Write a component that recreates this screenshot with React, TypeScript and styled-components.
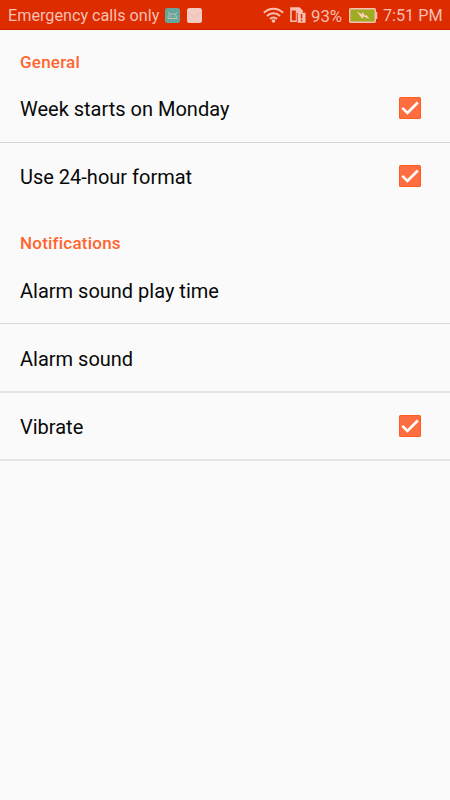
import React from "react";
import styled, { createGlobalStyle } from "styled-components";

const GlobalStyle = createGlobalStyle`
  *, *::before, *::after { box-sizing: border-box; }
  html, body { margin: 0; background: #fafafa; }
  body { font-family: Roboto, "Liberation Sans", sans-serif; }
`;

const Screen = styled.main`
  width: 100%;
  min-height: 800px;
  background: #fafafa;
  overflow: hidden;
`;

const StatusBar = styled.header`
  display: flex;
  align-items: center;
  height: 30px;
  padding: 1px 8px 0;
  background: #dd2c00;
  border-bottom: 1px solid #d01700;
  color: #f8bfb2;
  white-space: nowrap;
`;

const StatusText = styled.span<{ $width: number; $gap?: number }>`
  flex: none;
  width: ${(p) => p.$width}px;
  margin-left: ${(p) => p.$gap ?? 0}px;
  padding-top: 2px;
  font-size: 16.2px;
  line-height: 26px;
`;

const Percentage = styled(StatusText)`
  font-size: 16.8px;
`;

const StatusIcon = styled.svg<{ $gap: number }>`
  display: block;
  flex: none;
  margin-left: ${(p) => p.$gap}px;
`;

const Spacer = styled.div`
  flex: 1;
`;

const SectionTitle = styled.h2`
  display: flex;
  align-items: center;
  height: 45px;
  margin: 0;
  padding: 19px 20px 0;
  color: #ff652f;
  font-size: 17px;
  font-weight: 500;
  letter-spacing: 0.22px;
  line-height: 24px;
`;

const Row = styled.label<{ $line?: string; $thickness?: number; $height?: number; $top?: number }>`
  display: flex;
  align-items: center;
  justify-content: space-between;
  height: ${(p) => p.$height ?? 68}px;
  padding: ${(p) => p.$top ?? 2}px 29px 0 20px;
  border-bottom: ${(p) => p.$thickness ?? 1}px solid ${(p) => p.$line ?? "transparent"};
`;

const RowLabel = styled.span`
  color: #080808;
  font-size: 20px;
  line-height: 28px;
  white-space: nowrap;
`;

const CheckIcon = styled.svg`
  display: block;
  margin-top: -3px;
`;

const Checkbox = () => (
  <CheckIcon width="22" height="22" viewBox="0 0 22 22">
    <rect width="22" height="22" rx="1.5" fill="#ff5d20" />
    <rect x="1" y="1" width="20" height="20" rx="1" fill="#ff6e40" />
    <path d="M3.3 10.9 8.4 15.9 18.8 5.5" fill="none" stroke="#fff" strokeWidth="2.6" />
  </CheckIcon>
);

const AndroidIcon = () => (
  <StatusIcon $gap={6} width="15" height="15" viewBox="0 0 15 15">
    <rect width="15" height="15" rx="2.5" fill="#65a59b" />
    <path d="M3 10.5h9c0-2.8-1.8-4.6-4.5-4.6S3 7.7 3 10.5ZM4.8 6.7 3.4 4.3M10.2 6.7 11.6 4.3" fill="none" stroke="#c3c4b8" />
    <path d="M5.3 8.5h.8M8.9 8.5h.8" stroke="#c3c4b8" />
  </StatusIcon>
);

const MailIcon = () => (
  <StatusIcon $gap={7} width="15" height="15" viewBox="0 0 15 15">
    <rect width="15" height="15" rx="2.5" fill="#f3cbc3" />
    <path d="M1 4.5 7.5 9 14 4.5" fill="none" stroke="#ebb5ab" strokeWidth="0.8" />
  </StatusIcon>
);

const WifiIcon = () => (
  <StatusIcon $gap={0} width="21" height="16" viewBox="0 0 21 16">
    <g fill="none" stroke="#f8bfb2" strokeWidth="2.1">
      <path d="M.9 5.7Q5.2 1.7 10.5 1.7T20.1 5.7" />
      <path d="M4 9Q6.8 6.2 10.5 6.2T17 9" />
      <path d="M7 12Q8.5 10.5 10.5 10.5T14 12" />
    </g>
    <circle cx="10.5" cy="14" r="1.8" fill="#f8bfb2" />
  </StatusIcon>
);

const SimIcon = () => (
  <StatusIcon $gap={6} width="16" height="16" viewBox="0 0 16 16">
    <path d="M.2.3h9.300L13 3.800V5H6.800v10H.2ZM1.800 3.500v9.900h4V3.500Z" fill="#f8bfb2" fillRule="evenodd" />
    <path d="M6.600 3.800h4.200l2 2H15.500V15.700H7.700V6H6.600Z" fill="#f8bfb2" />
    <path d="M11.600 7v4.500M11.600 12.700v1.500" stroke="#dd2c00" strokeWidth="1.500" />
  </StatusIcon>
);

const BatteryIcon = () => (
  <StatusIcon $gap={0} width="29" height="15" viewBox="0 0 29 15">
    <rect x=".7" y=".7" width="25.600" height="13.600" rx="1" fill="#9fab22" stroke="#f8bfb2" strokeWidth="1.400" />
    <path d="M26.500 4H28.300v7H26.500Z" fill="#f8bfb2" />
    <path d="m7.500 3.300 5.300 2.900.7-2.200 2.500 3.700 1.700-.8 2.600 4-5.700-2.300-1.200 2.200Z" fill="#ffd0bd" />
  </StatusIcon>
);

interface Setting {
  label: string;
  checked?: boolean;
  line?: string;
  thickness?: number;
  height?: number;
  top?: number;
}

const general: Setting[] = [
  { label: "Week starts on Monday", checked: true, line: "#d5d5d5", top: 1 },
  { label: "Use 24-hour format", checked: true, top: 1 },
];

const notifications: Setting[] = [
  { label: "Alarm sound play time", line: "#d9d9d9" },
  { label: "Alarm sound", line: "#e5e5e5", thickness: 2, height: 69 },
  { label: "Vibrate", checked: true, line: "#e5e5e5", thickness: 2 },
];

const Settings = ({ items }: { items: Setting[] }) => (
  <>
    {items.map((item) => (
      <Row key={item.label} $line={item.line} $thickness={item.thickness} $height={item.height} $top={item.top}>
        <RowLabel>{item.label}</RowLabel>
        {item.checked && <Checkbox />}
      </Row>
    ))}
  </>
);

export default function App() {
  return (
    <>
      <GlobalStyle />
      <Screen>
        <StatusBar>
          <StatusText $width={151}>Emergency calls only</StatusText>
          <AndroidIcon />
          <MailIcon />
          <Spacer />
          <WifiIcon />
          <SimIcon />
          <Percentage $width={38} $gap={5}>93%</Percentage>
          <BatteryIcon />
          <StatusText $width={59} $gap={5}>7:51 PM</StatusText>
        </StatusBar>
        <SectionTitle>General</SectionTitle>
        <Settings items={general} />
        <SectionTitle>Notifications</SectionTitle>
        <Settings items={notifications} />
      </Screen>
    </>
  );
}
